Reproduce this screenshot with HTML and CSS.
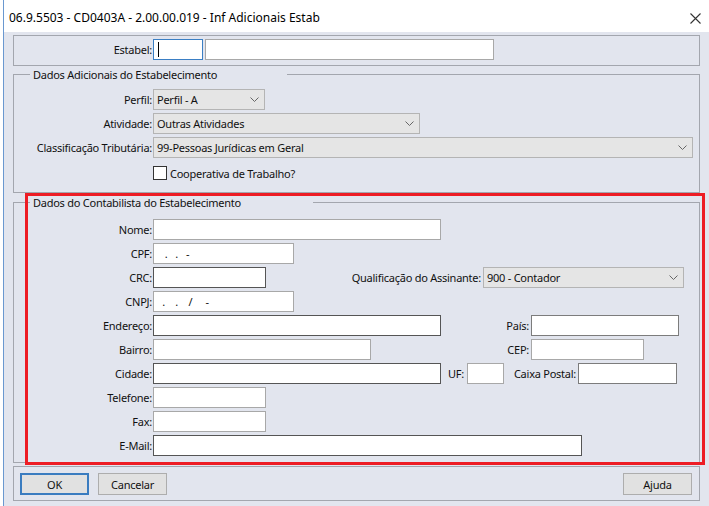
FILE: index.html
```html
<!DOCTYPE html>
<html lang="pt-BR">
<head>
    <meta charset="UTF-8">
    <title>Inf Adicionais Estab</title>
    <link rel="stylesheet" href="styles.css">
</head>
<body>

    <div class="window">
        <div class="frame">

            <!-- Title bar -->
            <div class="titlebar">
                <span class="title">06.9.5503 - CD0403A - 2.00.00.019 - Inf Adicionais Estab</span>
                <svg class="close" width="11" height="11" viewBox="0 0 11 11">
                    <path d="M0.5 0.5 L10.5 10.5 M10.5 0.5 L0.5 10.5" stroke="#333" stroke-width="1.1" fill="none"/>
                </svg>
            </div>

            <div class="content">

                <!-- Estabelecimento -->
                <div class="panel estabel-panel">
                    <div class="row">
                        <span class="lbl">Estabel:</span>
                        <div class="field focused f-cod"><span class="caret"></span></div>
                        <div class="field f-estnome"></div>
                    </div>
                </div>

                <!-- Dados Adicionais do Estabelecimento -->
                <div class="group group-adic">
                    <div class="group-title title-adic">Dados Adicionais do Estabelecimento</div>
                    <div class="row">
                        <span class="lbl">Perfil:</span>
                        <div class="select s-perfil"><span>Perfil - A</span><svg class="chev" width="9" height="5" viewBox="0 0 9 5"><polyline points="0.5,0.5 4.5,4.5 8.5,0.5" fill="none" stroke="#666"/></svg></div>
                    </div>
                    <div class="row">
                        <span class="lbl">Atividade:</span>
                        <div class="select s-ativ"><span>Outras Atividades</span><svg class="chev" width="9" height="5" viewBox="0 0 9 5"><polyline points="0.5,0.5 4.5,4.5 8.5,0.5" fill="none" stroke="#666"/></svg></div>
                    </div>
                    <div class="row">
                        <span class="lbl">Classificação Tributária:</span>
                        <div class="select s-class"><span>99-Pessoas Jurídicas em Geral</span><svg class="chev" width="9" height="5" viewBox="0 0 9 5"><polyline points="0.5,0.5 4.5,4.5 8.5,0.5" fill="none" stroke="#666"/></svg></div>
                    </div>
                    <div class="check-row">
                        <span class="checkbox"></span>
                        <span>Cooperativa de Trabalho?</span>
                    </div>
                </div>

                <!-- Dados do Contabilista -->
                <div class="group group-contab">
                    <div class="group-title title-contab">Dados do Contabilista do Estabelecimento</div>
                    <div class="row">
                        <span class="lbl">Nome:</span>
                        <div class="field f-long"></div>
                    </div>
                    <div class="row">
                        <span class="lbl">CPF:</span>
                        <div class="field f-doc mask">   .   .   -</div>
                    </div>
                    <div class="row">
                        <span class="lbl">CRC:</span>
                        <div class="field f-short dark"></div>
                        <span class="lbl2 l-qualif">Qualificação do Assinante:</span>
                        <div class="select s-qualif"><span>900 - Contador</span><svg class="chev" width="9" height="5" viewBox="0 0 9 5"><polyline points="0.5,0.5 4.5,4.5 8.5,0.5" fill="none" stroke="#666"/></svg></div>
                    </div>
                    <div class="row">
                        <span class="lbl">CNPJ:</span>
                        <div class="field f-doc mask">  .    .    /     -</div>
                    </div>
                    <div class="row">
                        <span class="lbl">Endereço:</span>
                        <div class="field f-long dark"></div>
                        <span class="lbl2 l-pais">País:</span>
                        <div class="field f-pais mid"></div>
                    </div>
                    <div class="row">
                        <span class="lbl">Bairro:</span>
                        <div class="field f-mid"></div>
                        <span class="lbl2 l-cep">CEP:</span>
                        <div class="field f-cep"></div>
                    </div>
                    <div class="row">
                        <span class="lbl">Cidade:</span>
                        <div class="field f-long dark"></div>
                        <span class="lbl2 l-uf">UF:</span>
                        <div class="field f-uf"></div>
                        <span class="lbl2 l-caixa">Caixa Postal:</span>
                        <div class="field f-caixa mid"></div>
                    </div>
                    <div class="row">
                        <span class="lbl">Telefone:</span>
                        <div class="field f-short"></div>
                    </div>
                    <div class="row">
                        <span class="lbl">Fax:</span>
                        <div class="field f-short"></div>
                    </div>
                    <div class="row">
                        <span class="lbl">E-Mail:</span>
                        <div class="field f-email dark"></div>
                    </div>
                </div>

                <!-- Buttons -->
                <div class="panel button-panel">
                    <button class="btn btn-default">OK</button>
                    <button class="btn btn-cancel">Cancelar</button>
                    <button class="btn btn-help">Ajuda</button>
                </div>

            </div>
        </div>

        <!-- Red highlight drawn over the form -->
        <div class="highlight"></div>
    </div>

</body>
</html>
```

FILE: styles.css
```css
body {
    margin: 0;
    padding: 0;
    background-color: #fff;
    font-family: "Noto Sans", "Open Sans", sans-serif;
    font-size: 11px;
    letter-spacing: -0.25px;
    color: #111;
}
.window {
    position: relative;
    width: 709px;
    height: 506px;
    overflow: hidden;
    background-color: #fff;
}
.frame {
    margin-left: 3px;
    border-left: 1px solid #6a98d0;
    height: 506px;
}
.titlebar {
    height: 32px;
    display: flex;
    align-items: center;
    justify-content: space-between;
    padding-left: 5px;
    padding-right: 8px;
    background-color: #fff;
}
.title {
    font-size: 12px;
    letter-spacing: 0;
    color: #000;
    margin-top: 2px;
}
.close {
    margin-top: 4px;
}
.content {
    height: 474px;
    background-color: #e2e5ee;
    padding: 3px 9px 0 9px;
    box-sizing: border-box;
}

/* Panels and group boxes */
.panel,
.group {
    border: 1px solid #a3a6ae;
}
.estabel-panel {
    padding: 3px 0 5px 0;
}
.group {
    padding-bottom: 6px;
}
.group-adic {
    margin-top: 8px;
    padding-bottom: 12px;
}
.group-contab {
    margin-top: 9px;
}
.group-title {
    height: 17px;
    line-height: 17px;
    margin-top: -9px;
    margin-left: 16px;
    padding-left: 3px;
    box-sizing: border-box;
    background-color: #e2e5ee;
}
.title-adic {
    width: 257px;
    margin-bottom: 6px;
}
.title-contab {
    width: 283px;
    margin-bottom: 8px;
}

/* Form rows */
.row {
    display: flex;
    align-items: center;
    height: 21px;
    margin-bottom: 3px;
}
.row:last-child {
    margin-bottom: 0;
}
.lbl,
.lbl2 {
    box-sizing: border-box;
    text-align: right;
    white-space: nowrap;
    padding-right: 1px;
}
.lbl {
    width: 139px;
}
.lbl2 {
    padding-right: 2px;
}
.l-qualif { width: 217px; }
.l-pais { width: 90px; }
.l-cep { width: 160px; }
.l-uf { width: 26px; padding-right: 3px; }
.l-caixa { width: 74px; }

.field {
    height: 21px;
    box-sizing: border-box;
    border: 1px solid #a8a8a8;
    background-color: #fff;
    flex: none;
}
.field.dark {
    border-color: #555;
}
.field.mid {
    border-color: #7c7c7c;
}
.field.focused {
    border-color: #3b7fc4;
    display: flex;
    align-items: center;
    padding-left: 4px;
}
.caret {
    width: 1px;
    height: 15px;
    background-color: #000;
}
.mask {
    white-space: pre;
    line-height: 19px;
    padding-left: 3px;
}
.f-cod { width: 50px; margin-right: 2px; }
.f-estnome { width: 289px; }
.f-long { width: 288px; }
.f-doc { width: 141px; }
.f-short { width: 113px; }
.f-mid { width: 218px; }
.f-email { width: 429px; }
.f-pais { width: 148px; }
.f-cep { width: 113px; }
.f-uf { width: 37px; }
.f-caixa { width: 99px; }

.select {
    height: 21px;
    box-sizing: border-box;
    border: 1px solid #b4b4b4;
    background-color: #e5e5e5;
    display: flex;
    align-items: center;
    justify-content: space-between;
    padding-left: 3px;
    padding-right: 5px;
    flex: none;
}
.s-perfil { width: 112px; }
.s-ativ { width: 267px; }
.s-class { width: 540px; }
.s-qualif { width: 201px; }

.check-row {
    display: flex;
    align-items: center;
    height: 14px;
    margin-top: 8px;
    padding-left: 139px;
}
.checkbox {
    width: 14px;
    height: 14px;
    box-sizing: border-box;
    border: 1px solid #333;
    background-color: #fff;
    margin-right: 3px;
}

/* Buttons */
.button-panel {
    margin-top: 3px;
    display: flex;
    padding: 6px 7px 5px 6px;
}
.btn {
    width: 69px;
    height: 22px;
    box-sizing: border-box;
    border: 1px solid #adadad;
    background-color: #e1e1e1;
    font-family: "Noto Sans", "Open Sans", sans-serif;
    font-size: 11px;
    letter-spacing: -0.25px;
    color: #111;
    padding: 0;
}
.btn-default {
    border: 2px solid #3a7cc0;
}
.btn-cancel {
    margin-left: 9px;
}
.btn-help {
    margin-left: auto;
}

/* Red annotation box */
.highlight {
    position: absolute;
    left: 25px;
    top: 193px;
    width: 680px;
    height: 272px;
    box-sizing: border-box;
    border: 3px solid #ed1c24;
    pointer-events: none;
}
```
